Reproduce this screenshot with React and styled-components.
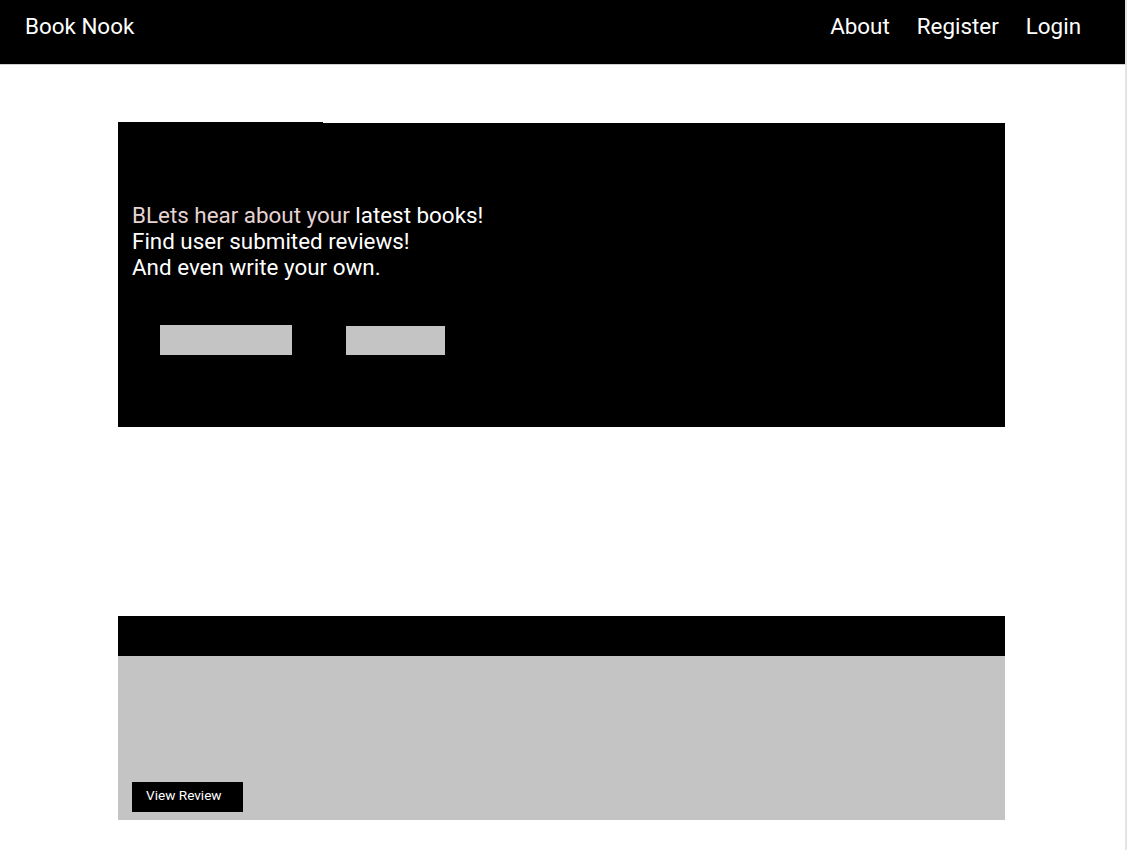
import { createGlobalStyle } from "styled-components";
import styled from "styled-components";

const GlobalStyle = createGlobalStyle`
  html, body {
    margin: 0;
    padding: 0;
    background: #ffffff;
  }
  body {
    font-family: Roboto, "Liberation Sans", sans-serif;
  }
`;

const Page = styled.div`
  width: 1125px;
  min-height: 850px;
  border-right: 2px solid #e4e4e4;
  background: #ffffff;
`;

const NavBar = styled.header`
  height: 65px;
  background: #000000;
  display: flex;
  align-items: center;
  justify-content: space-between;
  padding: 0 44px 0 25px;
  box-sizing: border-box;
  border-bottom: 1px solid #d0d0d0;
`;

const Brand = styled.div`
  color: #ffffff;
  font-size: 22.4px;
  margin-top: -12px;
`;

const NavLinks = styled.nav`
  display: flex;
  gap: 27px;
  margin-top: -12px;
`;

const NavLink = styled.a`
  color: #ffffff;
  font-size: 22.4px;
  text-decoration: none;
`;

const Main = styled.main`
  display: flex;
  flex-direction: column;
  padding: 58px 0 0 118px;
`;

const Hero = styled.section`
  position: relative;
  width: 887px;
  height: 304px;
  background: #000000;
  box-sizing: border-box;
  padding: 79px 0 0 14px;

  &::before {
    content: "";
    position: absolute;
    left: 0;
    top: -1px;
    width: 205px;
    height: 1px;
    background: #000000;
  }
`;

const HeroText = styled.p`
  margin: 0;
  color: #ffffff;
  font-size: 22.4px;
  line-height: 26px;
`;

const Faded = styled.span`
  color: #e6d3d3;
`;

const ButtonRow = styled.div`
  display: flex;
  align-items: flex-start;
  gap: 54px;
  margin: 45px 0 0 28px;
`;

const GreyButton = styled.button`
  width: ${(p) => p.$w}px;
  height: ${(p) => p.$h || 30}px;
  margin-top: ${(p) => p.$offset || 0}px;
  border: none;
  background: #c4c4c4;
  padding: 0;
`;

const Card = styled.article`
  width: 887px;
  margin-top: 189px;
  display: flex;
  flex-direction: column;
`;

const CardHead = styled.div`
  height: 40px;
  background: #000000;
`;

const CardBody = styled.div`
  height: 164px;
  background: #c4c4c4;
  display: flex;
  align-items: flex-end;
  padding: 0 0 8px 14px;
  box-sizing: border-box;
`;

const ViewButton = styled.button`
  width: 111px;
  height: 30px;
  background: #000000;
  color: #ffffff;
  border: none;
  font-family: Roboto, "Liberation Sans", sans-serif;
  font-size: 13.6px;
  text-align: left;
  padding: 0 0 5px 14px;
`;

export default function App() {
  return (
    <>
      <GlobalStyle />
      <Page>
        <NavBar>
          <Brand>Book Nook</Brand>
          <NavLinks>
            <NavLink>About</NavLink>
            <NavLink>Register</NavLink>
            <NavLink>Login</NavLink>
          </NavLinks>
        </NavBar>
        <Main>
          <Hero>
            <HeroText>
              <Faded>BLets hear about your</Faded> latest books!
              <br />
              Find user submited reviews!
              <br />
              And even write your own.
            </HeroText>
            <ButtonRow>
              <GreyButton $w={132} />
              <GreyButton $w={99} $h={29} $offset={1} />
            </ButtonRow>
          </Hero>
          <Card>
            <CardHead />
            <CardBody>
              <ViewButton>View Review</ViewButton>
            </CardBody>
          </Card>
        </Main>
      </Page>
    </>
  );
}
